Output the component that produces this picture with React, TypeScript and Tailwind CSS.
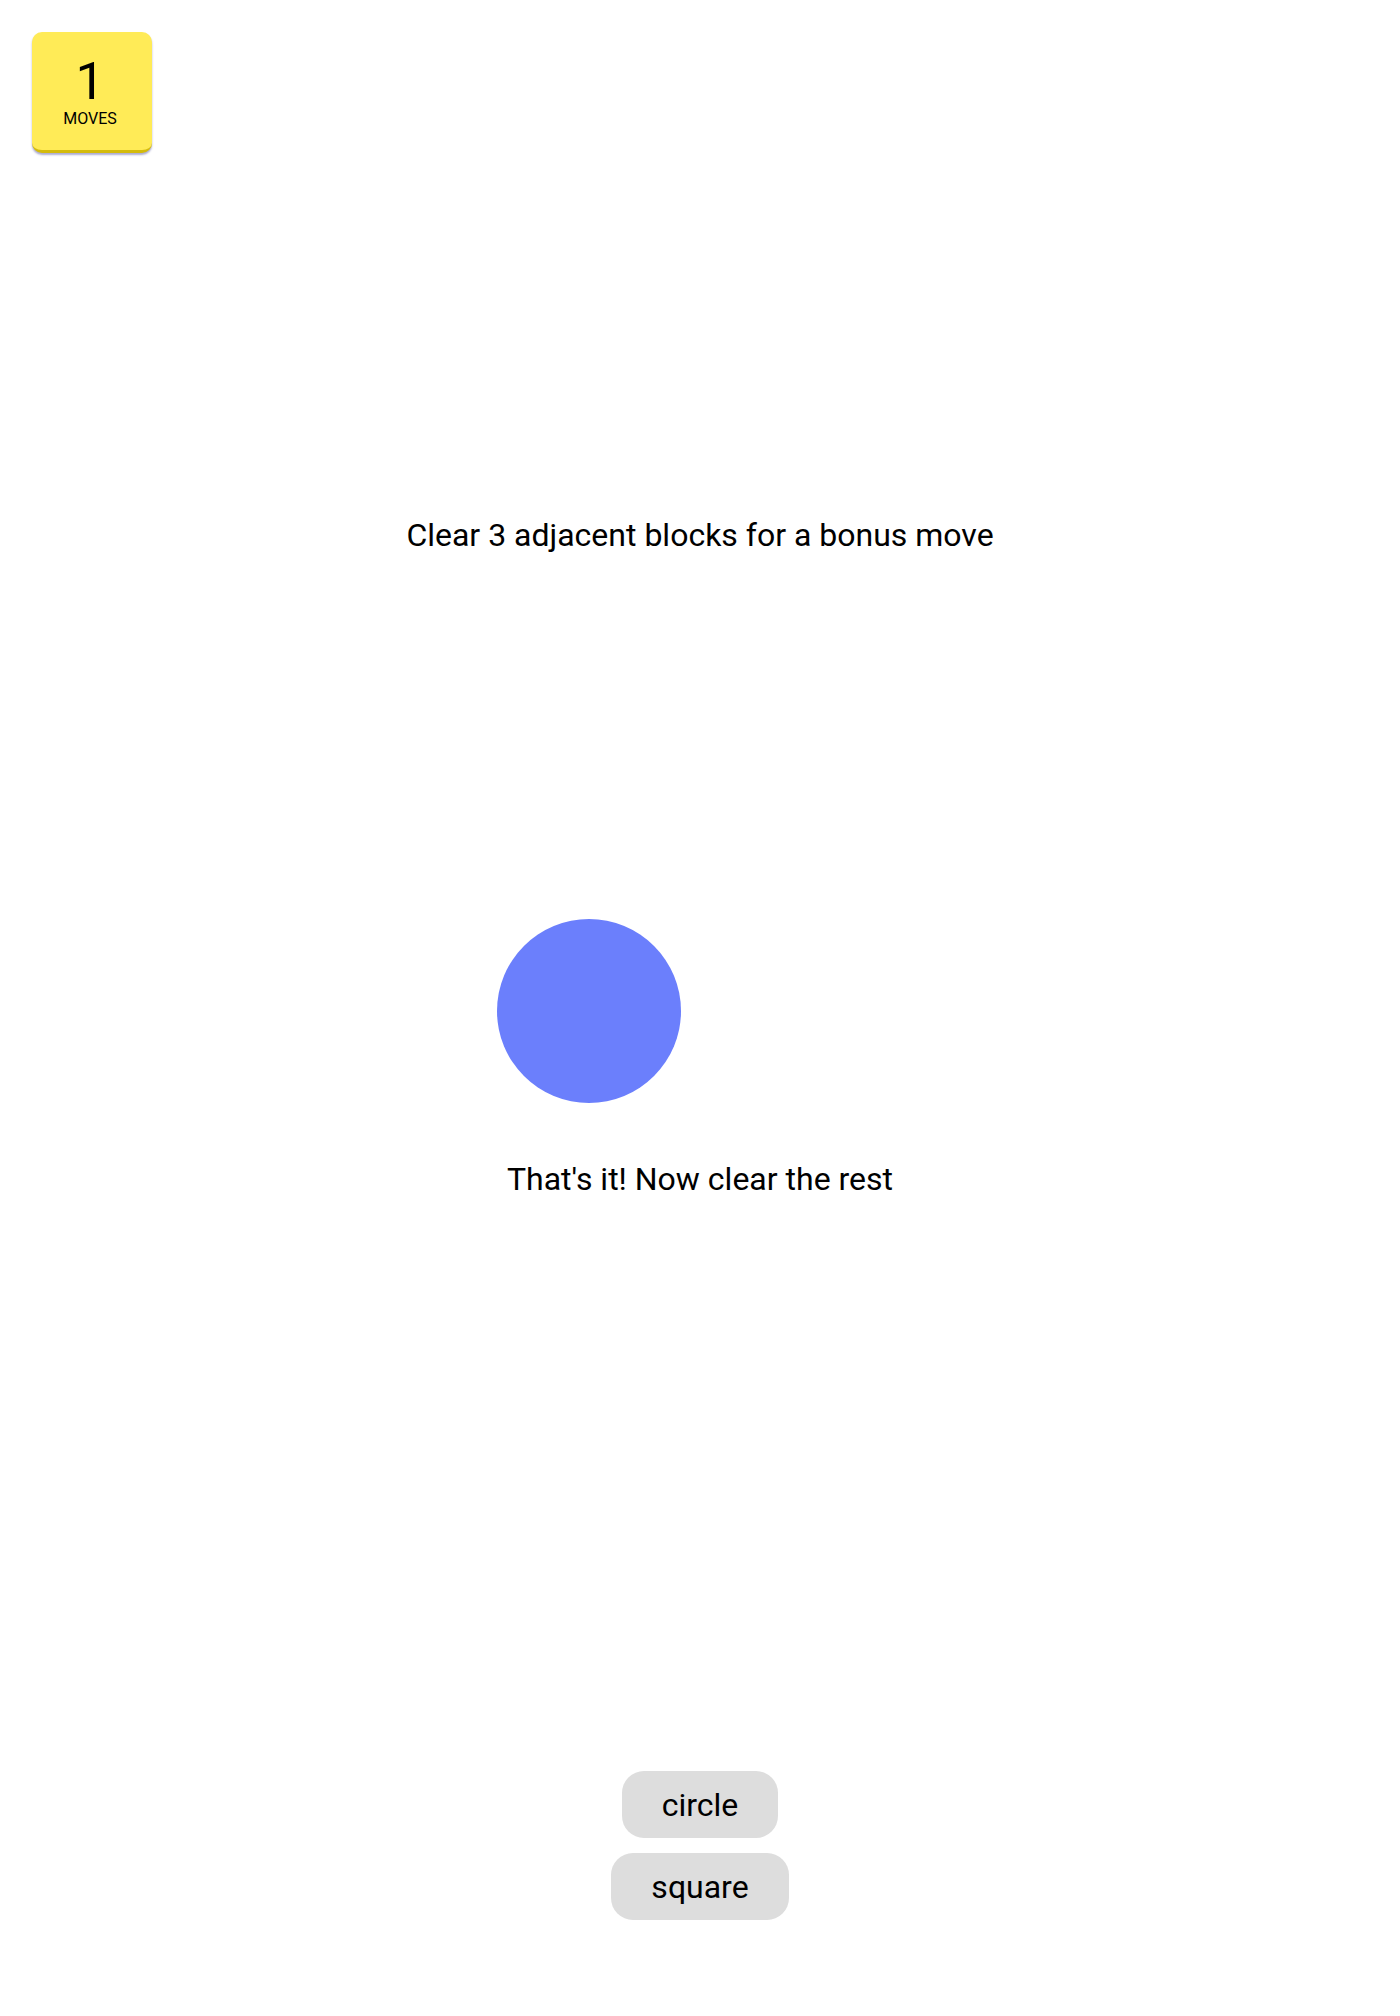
const font = { fontFamily: "Roboto, 'Noto Sans', sans-serif" }

const MovesBox = () => {
  return (
    <div className="flex h-[121px] w-[120px] flex-col items-center justify-center rounded-[10px] border-b-[3px] border-[#d4bb0c] bg-[#ffeb57] pr-1 text-black shadow-[0_2px_2px_rgba(70,70,150,0.45)]">
      <div className="text-[52px] leading-none">1</div>
      <div className="mt-[3px] text-[16px] leading-none">MOVES</div>
    </div>
  )
}

const App = () => {
  return (
    <div className="min-h-[2016px] w-full bg-white text-black" style={font}>
      <div className="px-8 pt-8">
        <MovesBox />
      </div>

      <p className="mt-[363px] text-center text-[32px] leading-[38px]">Clear 3 adjacent blocks for a bonus move</p>

      <div className="mx-auto mt-[365px] grid w-fit grid-cols-2 gap-[38px]">
        <div className="h-[184px] w-[184px] rounded-full bg-[#6b7ffc]"></div>
        <div className="h-[184px] w-[184px]"></div>
      </div>

      <p className="mt-[57px] text-center text-[32px] leading-[38px]">That's it! Now clear the rest</p>

      <div className="mt-[573px] flex flex-col items-center gap-[15px]">
        <button className="h-[67px] rounded-[22px] bg-[#dddddd] px-[40px] text-[32px] leading-[38px]">circle</button>
        <button className="h-[67px] rounded-[22px] bg-[#dddddd] px-[40px] text-[32px] leading-[38px]">square</button>
      </div>
    </div>
  )
}

export default App
